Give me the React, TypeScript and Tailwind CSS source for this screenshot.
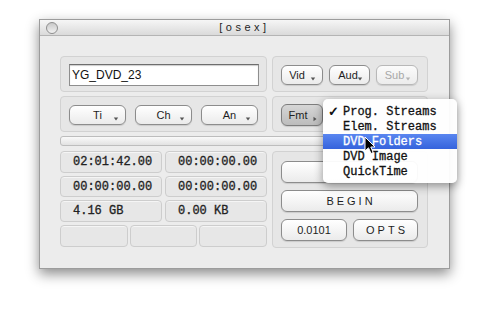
import React from 'react';

const sans = { fontFamily: '"Liberation Sans", Arial, sans-serif' };
const mono = { fontFamily: '"Liberation Mono", "Courier New", monospace' };

const Arrow = ({ dir = 'down', dim = false }: { dir?: 'down' | 'right'; dim?: boolean }) => (
  <svg
    width="6"
    height="6"
    viewBox="0 0 6 6"
    className={dir === 'down' ? 'absolute right-[6px] bottom-[2px]' : 'absolute right-[4px] bottom-[3px]'}
  >
    {dir === 'down' ? (
      <path d="M0.8 1.5 L5.2 1.5 L3 4.5 Z" fill={dim ? '#b4b4b4' : '#555'} />
    ) : (
      <path d="M1.5 0.8 L4.5 3 L1.5 5.2 Z" fill="#555" />
    )}
  </svg>
);

const AquaButton = ({
  label,
  className = '',
  arrow,
  pressed = false,
  disabled = false,
  spaced = false,
}: {
  label?: string;
  className?: string;
  arrow?: 'down' | 'right';
  pressed?: boolean;
  disabled?: boolean;
  spaced?: boolean;
}) => (
  <div
    className={`relative flex items-center justify-center rounded-[6px] border text-[11px] ${
      pressed
        ? 'border-[#7d7d7d] bg-gradient-to-b from-[#d6d6d6] to-[#bcbcbc] text-[#222]'
        : disabled
        ? 'border-[#b8b8b8] bg-gradient-to-b from-[#fbfbfb] to-[#ececec] text-[#a8a8a8]'
        : 'border-[#8c8c8c] bg-gradient-to-b from-[#ffffff] to-[#ebebeb] text-[#1e1e1e]'
    } shadow-[0_1px_1px_rgba(0,0,0,0.12)] ${spaced ? 'tracking-[3px] pl-[3px]' : ''} ${className}`}
    style={sans}
  >
    {label}
    {arrow && <Arrow dir={arrow} dim={disabled} />}
  </div>
);

const GroupBox = ({ className = '', children }: { className?: string; children?: React.ReactNode }) => (
  <div className={`rounded-[4px] border border-[#d2d2d2] bg-[#e6e6e6] ${className}`}>{children}</div>
);

const Field = ({ text = '' }: { text?: string }) => (
  <div
    className="flex items-center rounded-[4px] border border-[#cdcdcd] bg-[#e7e7e7] pl-[12px] text-[12px] text-[#222] [-webkit-text-stroke:0.3px_#222] shadow-[inset_0_1px_0_rgba(255,255,255,0.6)]"
    style={mono}
  >
    {text}
  </div>
);

const menuItems = ['Prog. Streams', 'Elem. Streams', 'DVD Folders', 'DVD Image', 'QuickTime'];

export default function App() {
  return (
    <div className="w-[497px] h-[329px] bg-white pl-[39px] pt-[19px] overflow-hidden">
      <div className="relative w-[411px] h-[250px] border border-[#9c9c9c] bg-[#ececec] shadow-[0_5px_12px_rgba(0,0,0,0.45)]">
        {/* Title bar */}
        <div className="relative flex h-[16px] items-center justify-center border-b border-[#b4b4b4] bg-gradient-to-b from-[#f6f6f6] to-[#dadada]">
          <div className="absolute left-[6px] top-[2px] h-[12px] w-[12px] rounded-full border border-[#8e8e8e] bg-gradient-to-b from-[#c8c8c8] to-[#f2f2f2]" />
          <span className="text-[11px] tracking-[3.5px] text-[#262626]" style={sans}>
            [osex]
          </span>
        </div>

        {/* Body */}
        <div className="flex flex-col gap-[4px] px-[20px] pt-[20px]">
          <div className="flex gap-[5px]">
            <GroupBox className="h-[36px] w-[207px] pl-[8px] pt-[7px]">
              <div
                className="flex h-[22px] w-[190px] items-center border border-[#8e8e8e] border-t-[#6e6e6e] bg-white pl-[2px] text-[12px] text-[#111] shadow-[inset_0_1px_1px_rgba(0,0,0,0.2)]"
                style={sans}
              >
                YG_DVD_23
              </div>
            </GroupBox>
            <GroupBox className="flex h-[36px] w-[156px] items-start gap-[6px] pl-[8px] pt-[8px]">
              <AquaButton label="Vid" arrow="down" className="h-[20px] w-[42px] pr-[10px]" />
              <AquaButton label="Aud" arrow="down" className="h-[20px] w-[41px] pr-[3px]" />
              <AquaButton label="Sub" arrow="down" disabled className="h-[20px] w-[42px] pr-[5px]" />
            </GroupBox>
          </div>

          <div className="flex gap-[5px]">
            <GroupBox className="flex h-[36px] w-[207px] items-start gap-[9px] pl-[8px] pt-[8px]">
              <AquaButton label="Ti" arrow="down" className="h-[20px] w-[57px]" />
              <AquaButton label="Ch" arrow="down" className="h-[20px] w-[57px]" />
              <AquaButton label="An" arrow="down" className="h-[20px] w-[57px]" />
            </GroupBox>
            <GroupBox className="flex h-[36px] w-[156px] items-start pl-[8px] pt-[7px]">
              <AquaButton label="Fmt" arrow="right" pressed className="h-[22px] w-[42px] pr-[8px]" />
            </GroupBox>
          </div>

          {/* Progress bar */}
          <div className="h-[10px] w-[368px] rounded-[3px] border border-[#bdbdbd] bg-gradient-to-b from-[#fafafa] to-[#e2e2e2]" />

          <div className="mt-[1px] flex gap-[5px]">
            <div className="flex w-[207px] flex-col gap-[3px]">
              <div className="grid h-[22px] grid-cols-2 gap-[3px]">
                <Field text="02:01:42.00" />
                <Field text="00:00:00.00" />
              </div>
              <div className="grid h-[21px] grid-cols-2 gap-[3px]">
                <Field text="00:00:00.00" />
                <Field text="00:00:00.00" />
              </div>
              <div className="grid h-[22px] grid-cols-2 gap-[3px]">
                <Field text="4.16 GB" />
                <Field text="0.00 KB" />
              </div>
              <div className="grid h-[22px] grid-cols-3 gap-[2px]">
                <Field />
                <Field />
                <Field />
              </div>
            </div>
            <GroupBox className="flex h-[97px] w-[156px] flex-col gap-[7px] pl-[8px] pr-[9px] pt-[9px]">
              <AquaButton className="h-[22px] w-full" />
              <AquaButton label="BEGIN" spaced className="h-[22px] w-full" />
              <div className="flex gap-[6px]">
                <AquaButton label="0.0101" className="h-[22px] w-[66px]" />
                <AquaButton label="OPTS" spaced className="h-[22px] flex-1" />
              </div>
            </GroupBox>
          </div>
        </div>

        {/* Format popup menu */}
        <div className="absolute left-[283px] top-[79px] w-[134px] rounded-[5px] bg-white/95 pt-[5px] pb-[4px] shadow-[0_3px_10px_rgba(0,0,0,0.4)]">
          {menuItems.map((item, i) => (
            <div
              key={item}
              className={`relative flex h-[15px] items-center pl-[20px] text-[12px] ${
                i === 2
                  ? 'bg-gradient-to-b from-[#5a86f0] to-[#3563dc] text-white [-webkit-text-stroke:0.3px_#fff]'
                  : 'text-[#111] [-webkit-text-stroke:0.3px_#111]'
              }`}
              style={mono}
            >
              {i === 0 && (
                <span className="absolute left-[5px] text-[13px] font-bold [-webkit-text-stroke:0px]" style={sans}>
                  ✓
                </span>
              )}
              {item}
            </div>
          ))}
          <svg className="absolute left-[41px] top-[37px]" width="12" height="19" viewBox="0 0 12 19">
            <path
              d="M1 1 L1 15 L4.5 11.8 L7 17.5 L9.2 16.5 L6.8 11 L11 11 Z"
              fill="#000"
              stroke="#fff"
              strokeWidth="1"
              strokeLinejoin="round"
            />
          </svg>
        </div>
      </div>
    </div>
  );
}
